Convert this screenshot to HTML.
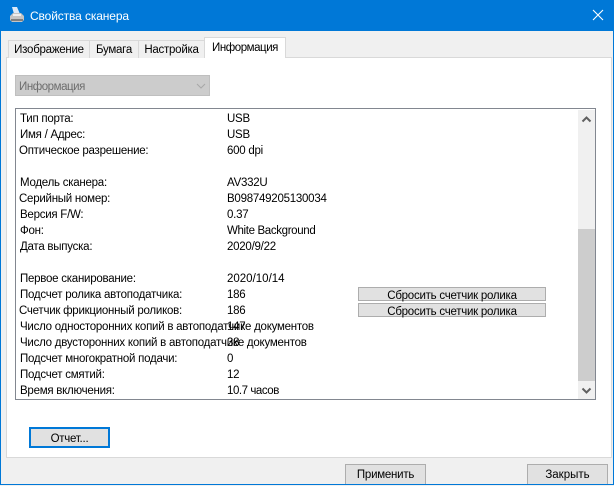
<!DOCTYPE html>
<html lang="ru"><head><meta charset="utf-8"><title>Свойства сканера</title>
<style>
html,body{margin:0;padding:0}
body{width:614px;height:485px;overflow:hidden;position:relative;background:#f0f0f0;font:11.5px/16px "Liberation Sans",sans-serif;letter-spacing:-.25px;color:#000}
div{position:absolute;box-sizing:border-box;white-space:nowrap}
.l{left:20px;height:16px;line-height:18px}
.v{left:227px;height:16px;line-height:18px}
.tab{background:#f0f0f0;border:1px solid #d9d9d9;border-bottom:0;text-align:center;top:40px;height:18px;line-height:18px}
.btn{background:#e1e1e1;border:1px solid #adadad;text-align:center}
</style></head><body>
<div style="left:0;top:0;width:614px;height:31px;background:#0078d7"></div>
<svg style="position:absolute;left:8px;top:6px" width="18" height="18" viewBox="0 0 18 18"><path d="M4 1h5l3 7H6z" fill="#dbe9f8"/><path d="M2 10l3-3h8l3 3v4l-2 2H4l-2-2z" fill="#c4c4c4"/><path d="M3 13h12v2H3z" fill="#7f7f7f"/><path d="M5 8h8v2H5z" fill="#eee"/></svg>
<div style="left:30px;top:8px;color:#fff;font-size:12px;letter-spacing:-.12px">Свойства сканера</div>
<svg style="position:absolute;left:592px;top:9px" width="12" height="12"><path d="M1 1l10 10M11 1L1 11" stroke="#fff" stroke-width="1.1"/></svg>

<div style="left:6px;top:57px;width:606px;height:401px;background:#fff;border:1px solid #d9d9d9"></div>
<div class="tab" style="left:8px;width:82px">Изображение</div>
<div class="tab" style="left:89px;width:50px">Бумага</div>
<div class="tab" style="left:138px;width:67px">Настройка</div>
<div class="tab" style="left:204px;width:82px;top:37px;height:21px;background:#fff;line-height:20px;letter-spacing:-.45px">Информация</div>

<div style="left:15px;top:75px;width:195px;height:21px;background:#ccc;border:1px solid #bfbfbf;color:#6d6d6d;padding:3px 0 0 3px;letter-spacing:-.45px">Информация</div>
<svg style="position:absolute;left:196px;top:83px" width="10" height="6"><path d="M1 1l4 4 4-4" fill="none" stroke="#a8a8a8"/></svg>

<div style="left:15px;top:108px;width:581px;height:292px;background:#fff;border:1px solid #828790"></div>
<div style="left:578px;top:110px;width:17px;height:289px;background:#f0f0f0"></div>
<div style="left:578px;top:229px;width:17px;height:152px;background:#cdcdcd"></div>
<svg style="position:absolute;left:581px;top:116px" width="11" height="7"><path d="M1.5 5.5l4-4 4 4" fill="none" stroke="#606060" stroke-width="2"/></svg>
<svg style="position:absolute;left:581px;top:387px" width="11" height="7"><path d="M1.5 1.5l4 4 4-4" fill="none" stroke="#606060" stroke-width="2"/></svg>

<div class="l" style="top:110px">Тип порта:</div><div class="v" style="top:110px">USB</div>
<div class="l" style="top:126px">Имя / Адрес:</div><div class="v" style="top:126px">USB</div>
<div class="l" style="top:142px;left:19px">Оптическое разрешение:</div><div class="v" style="top:142px">600 dpi</div>
<div class="l" style="top:174px">Модель сканера:</div><div class="v" style="top:174px">AV332U</div>
<div class="l" style="top:190px;left:19px">Серийный номер:</div><div class="v" style="top:190px">B098749205130034</div>
<div class="l" style="top:206px">Версия F/W:</div><div class="v" style="top:206px">0.37</div>
<div class="l" style="top:222px">Фон:</div><div class="v" style="top:222px;letter-spacing:-.35px">White Background</div>
<div class="l" style="top:238px">Дата выпуска:</div><div class="v" style="top:238px">2020/9/22</div>
<div class="l" style="top:270px">Первое сканирование:</div><div class="v" style="top:270px;letter-spacing:0">2020/10/14</div>
<div class="l" style="top:286px">Подсчет ролика автоподатчика:</div><div class="v" style="top:286px">186</div>
<div class="l" style="top:302px;left:19px">Счетчик фрикционный роликов:</div><div class="v" style="top:302px">186</div>
<div class="l" style="top:318px">Число односторонних копий в автоподатчике документов</div><div class="v" style="top:318px">147</div>
<div class="l" style="top:334px">Число двусторонних копий в автоподатчике документов</div><div class="v" style="top:334px">38</div>
<div class="l" style="top:350px">Подсчет многократной подачи:</div><div class="v" style="top:350px">0</div>
<div class="l" style="top:366px">Подсчет смятий:</div><div class="v" style="top:366px">12</div>
<div class="l" style="top:382px">Время включения:</div><div class="v" style="top:382px;letter-spacing:-.45px">10.7 часов</div>

<div class="btn" style="left:358px;top:287px;width:188px;height:14px;line-height:16px">Сбросить счетчик ролика</div>
<div class="btn" style="left:358px;top:303px;width:188px;height:14px;line-height:16px">Сбросить счетчик ролика</div>

<div class="btn" style="left:29px;top:427px;width:81px;height:21px;border:2px solid #0078d7;line-height:20px">Отчет...</div>
<div class="btn" style="left:345px;top:464px;width:81px;height:21px;line-height:21px">Применить</div>
<div class="btn" style="left:527px;top:464px;width:81px;height:21px;line-height:21px;letter-spacing:0">Закрыть</div>
<div style="left:0;top:0;width:614px;height:485px;border:1px solid #0078d7;border-top:0"></div>
</body></html>
